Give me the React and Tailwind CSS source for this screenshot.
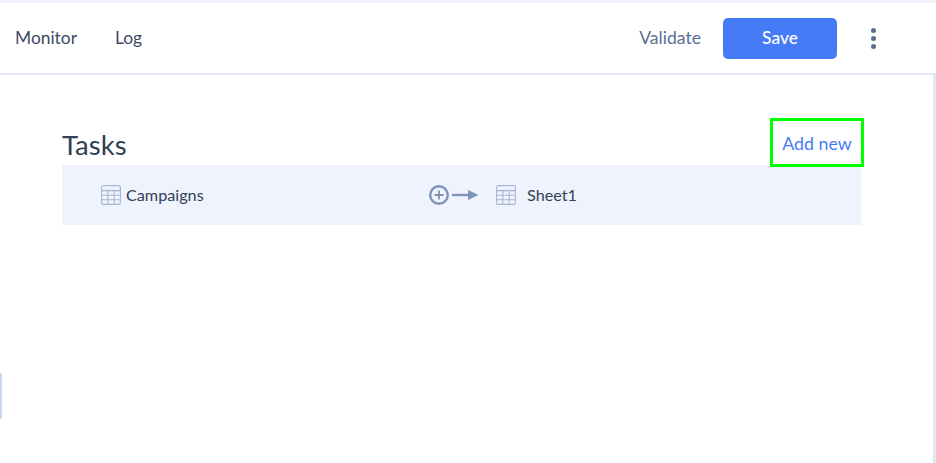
import React from "react";

const TableIcon = () => (
  <svg width="20" height="20" viewBox="0 0 20 20" fill="none" stroke="#a9b6d3" strokeWidth="1.1" className="shrink-0">
    <rect x="0.6" y="0.6" width="18.8" height="18.8" rx="2" />
    <path d="M0.6 5.6H19.4" strokeWidth="1.4" />
    <path d="M0.6 10.2H19.4M0.6 14.8H19.4M6.8 5.6V19.4M13.2 5.6V19.4" />
  </svg>
);

const AddArrowIcon = () => (
  <svg width="50" height="20" viewBox="0 0 50 20" fill="none" stroke="#8093b8" className="shrink-0">
    <circle cx="10" cy="10" r="8.8" strokeWidth="2.4" />
    <path d="M10 5.5V14.5M5.5 10H14.5" strokeWidth="1.8" />
    <path d="M23 10H40" strokeWidth="2.4" />
    <path d="M39 5L49.5 10L39 15Z" fill="#8093b8" stroke="none" />
  </svg>
);

const App = () => {
  return (
    <div className="relative flex h-[463px] w-[936px] flex-col overflow-hidden border-t-[3px] border-[#f0f2fa] bg-white font-['Lato',sans-serif] text-[#333f56]">
      <header className="flex h-[72px] shrink-0 items-center border-b-2 border-[#e3e9f8] pl-[15px] pr-[60px]">
        <nav className="flex items-center gap-[38px] text-[17.4px] text-[#3d4a63]">
          <span>Monitor</span>
          <span>Log</span>
        </nav>
        <div className="ml-auto flex items-center">
          <span className="text-[17.6px] text-[#5a6e94]">Validate</span>
          <button className="ml-[22px] h-[41px] w-[114px] rounded-[5px] bg-[#457bf7] text-[17.4px] font-medium text-white">
            Save
          </button>
          <div className="ml-[34px] flex flex-col gap-[3px]">
            <span className="h-[5px] w-[5px] rounded-full bg-[#5a6e94]" />
            <span className="h-[5px] w-[5px] rounded-full bg-[#5a6e94]" />
            <span className="h-[5px] w-[5px] rounded-full bg-[#5a6e94]" />
          </div>
        </div>
      </header>
      <main className="flex-1 border-r-[3px] border-[#dfe6f5] pl-[62px] pr-[72px] pt-[43px]">
        <div className="flex h-[49px] items-center justify-between">
          <h1 className="mt-[4px] text-[27.5px] font-normal leading-none text-[#333f56]">Tasks</h1>
          <button className="-mr-[3px] h-[49px] w-[94px] border-[3px] border-[#00ff00] pt-[2px] text-[17.8px] text-[#457bf7]">
            Add new
          </button>
        </div>
        <div className="-mt-[2px] flex h-[60px] items-center bg-[#eff3fd] pl-[39px] text-[16.2px] text-[#333f56]">
          <div className="flex w-[328px] items-center gap-[5px]">
            <TableIcon />
            <span>Campaigns</span>
          </div>
          <AddArrowIcon />
          <div className="ml-[17px] flex items-center gap-[11px]">
            <TableIcon />
            <span>Sheet1</span>
          </div>
        </div>
      </main>
      <div className="absolute left-0 top-[370px] h-[46px] w-[1.5px] bg-[#c9d8f3]" />
    </div>
  );
};

export default App;
